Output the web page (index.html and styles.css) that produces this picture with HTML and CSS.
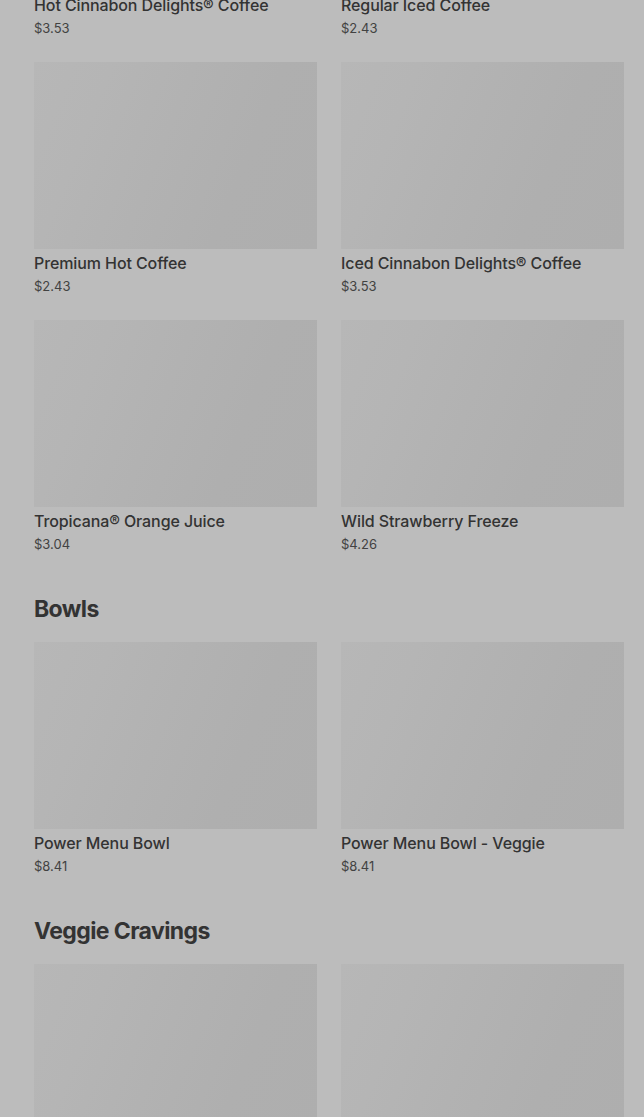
FILE: index.html
```html
<!DOCTYPE html>
<html lang="en">
<head>
<meta charset="utf-8">
<title>Menu</title>
<link rel="stylesheet" href="styles.css">
</head>
<body>
<main class="menu">
  <section class="section first">
    <div class="grid">
      <article class="item"><div class="thumb"></div><h3 class="name">Hot Cinnabon Delights® Coffee</h3><p class="price">$3.53</p></article>
      <article class="item"><div class="thumb"></div><h3 class="name">Regular Iced Coffee</h3><p class="price">$2.43</p></article>
      <article class="item"><div class="thumb"></div><h3 class="name">Premium Hot Coffee</h3><p class="price">$2.43</p></article>
      <article class="item"><div class="thumb"></div><h3 class="name">Iced Cinnabon Delights® Coffee</h3><p class="price">$3.53</p></article>
      <article class="item"><div class="thumb"></div><h3 class="name">Tropicana® Orange Juice</h3><p class="price">$3.04</p></article>
      <article class="item"><div class="thumb"></div><h3 class="name">Wild Strawberry Freeze</h3><p class="price">$4.26</p></article>
    </div>
  </section>
  <section class="section">
    <h2 class="heading">Bowls</h2>
    <div class="grid">
      <article class="item"><div class="thumb"></div><h3 class="name">Power Menu Bowl</h3><p class="price">$8.41</p></article>
      <article class="item"><div class="thumb"></div><h3 class="name">Power Menu Bowl - Veggie</h3><p class="price">$8.41</p></article>
    </div>
  </section>
  <section class="section">
    <h2 class="heading">Veggie Cravings</h2>
    <div class="grid">
      <article class="item"><div class="thumb"></div></article>
      <article class="item"><div class="thumb"></div></article>
    </div>
  </section>
</main>
</body>
</html>
```

FILE: styles.css
```css
html, body {
  margin: 0;
  padding: 0;
  background: #bcbcbc;
  overflow: hidden;
}
body {
  font-family: Inter, "Noto Sans", "Liberation Sans", sans-serif;
  color: #333333;
}
.menu {
  padding: 0 20px 0 34px;
  margin-top: -196px;
}
.section {
  display: flex;
  flex-direction: column;
}
.section + .section {
  margin-top: 40px;
}
.heading {
  margin: 0 0 17px;
  font-size: 23px;
  line-height: 32px;
  font-weight: 700;
  letter-spacing: -0.6px;
  color: #333333;
}
.grid {
  display: grid;
  grid-template-columns: 1fr 1fr;
  column-gap: 24px;
  row-gap: 25px;
}
.item {
  display: flex;
  flex-direction: column;
  min-width: 0;
}
.thumb {
  height: 187px;
  background: linear-gradient(112deg, #b7b7b7 0%, #b5b5b5 22%, #b2b2b2 45%, #afafaf 70%, #aeaeae 100%);
}
.name {
  margin: 4px 0 0;
  font-size: 16px;
  line-height: 20px;
  font-weight: 500;
  letter-spacing: -0.1px;
  color: #333333;
  white-space: nowrap;
  overflow: hidden;
}
.price {
  margin: 4px 0 0;
  font-size: 13px;
  line-height: 18px;
  font-weight: 400;
  color: #424242;
}
```
